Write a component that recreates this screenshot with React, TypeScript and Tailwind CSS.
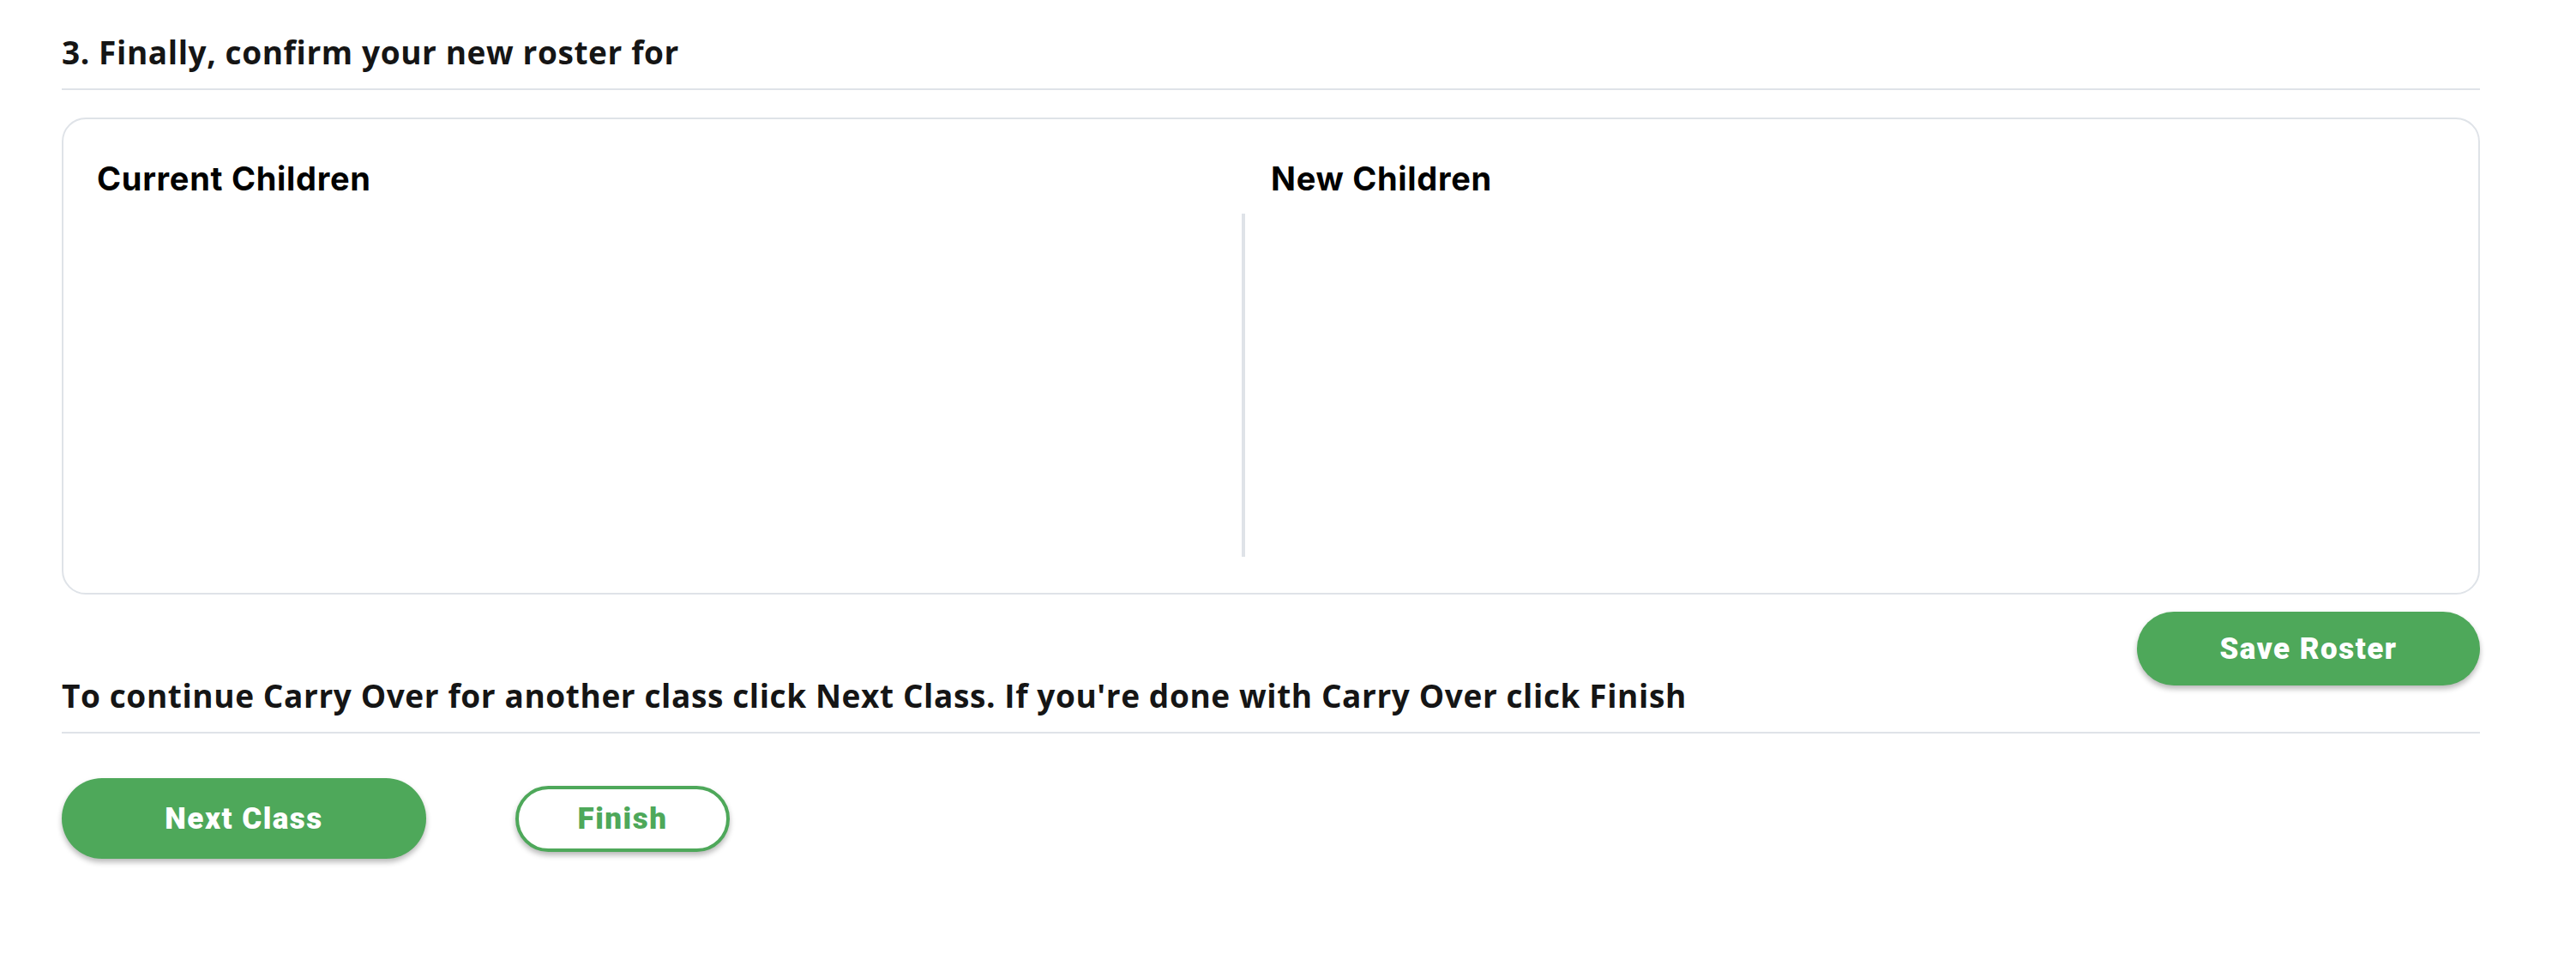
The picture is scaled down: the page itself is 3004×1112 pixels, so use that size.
export default function App() {
  const heading = "font-['Open_Sans','Noto_Sans',sans-serif] font-bold text-[37px] leading-[46px] text-[#151515] tracking-[0.6px]";
  const sub = "font-['Inter','Lato',sans-serif] font-bold text-[38px] leading-[46px] text-black tracking-[0.7px]";
  const btnFont = "font-['Roboto','Liberation_Sans',sans-serif] font-black text-[35px] leading-none tracking-[1.5px]";
  return (
    <div className="w-[3004px] min-h-[1112px] bg-white">
      <div className="ml-[72px] w-[2820px] pt-[38px]">
        <div className={`${heading} pb-[19px] border-b-2 border-[#dfe3e8]`}>
          3. Finally, confirm your new roster for
        </div>
        <div className="mt-[32px] border-2 border-[#dfe3e8] rounded-[28px] px-[39px] pt-[46px] pb-[42px] grid grid-cols-2">
          <div className="flex flex-col">
            <div className={sub}>Current Children</div>
            <div className="mt-[18px] h-[400px] mr-[30px] border-r-4 border-[#dfe3e8]" />
          </div>
          <div className="flex flex-col">
            <div className={sub}>New Children</div>
            <div className="mt-[18px] h-[400px]" />
          </div>
        </div>
        <div className="flex justify-end mt-[20px]">
          <button className={`${btnFont} w-[400px] h-[86px] rounded-full bg-[#4ea85a] text-white shadow-[0_4px_6px_rgba(0,0,0,0.28)]`}>
            Save Roster
          </button>
        </div>
        <div className={`${heading} mt-[-11px] pb-[19px] border-b-2 border-[#dfe3e8]`}>
          To continue Carry Over for another class click Next Class. If you're done with Carry Over click Finish
        </div>
        <div className="flex items-center gap-[104px] mt-[52px]">
          <button className={`${btnFont} w-[425px] h-[94px] rounded-full bg-[#4ea85a] text-white shadow-[0_4px_6px_rgba(0,0,0,0.28)]`}>
            Next Class
          </button>
          <button className={`${btnFont} w-[250px] h-[77px] rounded-full bg-white border-4 border-[#4ea85a] text-[#4ea85a] shadow-[0_4px_6px_rgba(0,0,0,0.28)]`}>
            Finish
          </button>
        </div>
      </div>
    </div>
  );
}
